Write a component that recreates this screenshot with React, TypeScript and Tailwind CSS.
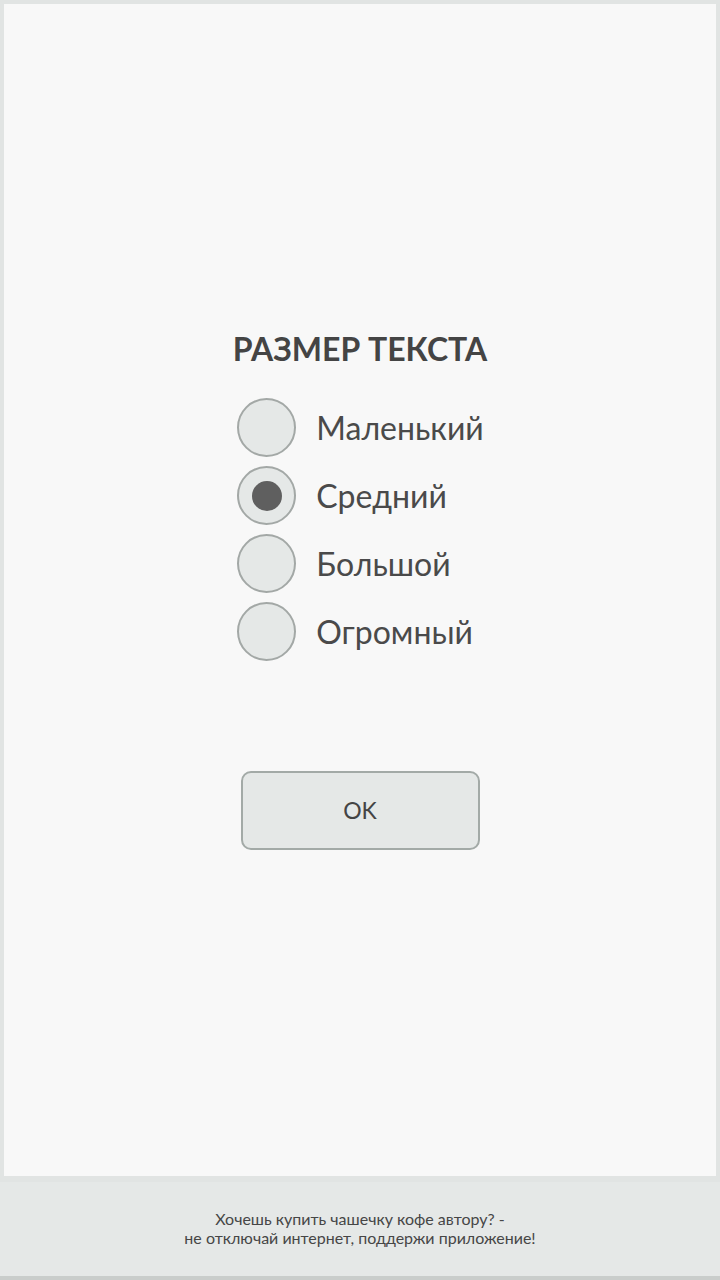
import { useState } from 'react';

const SIZES = ['Маленький', 'Средний', 'Большой', 'Огромный'];

function Radio({ checked }: { checked: boolean }) {
    return (
        <span className="flex h-[59px] w-[59px] shrink-0 items-center justify-center rounded-full border-2 border-[#a3a8a6] bg-[#e5e8e7]">
            {checked && <span className="h-[30px] w-[30px] rounded-full bg-[#5f5f5f]" />}
        </span>
    );
}

export default function App() {
    const [size, setSize] = useState(1);

    return (
        <div className="flex h-[1280px] w-[720px] flex-col bg-[#e1e4e3] font-['Lato',sans-serif]">
            <div className="mx-1 mt-1 flex h-[1172px] flex-col items-center bg-[#f8f8f8] pt-[326px]">
                <h1 className="text-[32px] leading-[38px] font-bold text-[#444444]">РАЗМЕР ТЕКСТА</h1>

                <div className="mt-[30px] flex flex-col gap-[9px] pl-[1px]">
                    {SIZES.map((label, i) => (
                        <button
                            key={label}
                            onClick={() => setSize(i)}
                            className="flex items-center gap-[20px] text-left"
                        >
                            <Radio checked={size === i} />
                            <span className="text-[32px] leading-[40px] text-[#4a4a4a]">{label}</span>
                        </button>
                    ))}
                </div>

                <button className="mt-[110px] flex h-[79px] w-[239px] items-center justify-center rounded-[10px] border-2 border-[#a3aaa7] bg-[#e5e8e7] text-[23px] text-[#444444]">
                    OK
                </button>
            </div>

            <div className="mt-[6px] flex flex-1 flex-col items-center justify-center border-b-4 border-[#c9cdcb] bg-[#e5e8e7] pb-[3px] text-center text-[16px] leading-[19px] text-[#464646]">
                <p>Хочешь купить чашечку кофе автору? -</p>
                <p>не отключай интернет, поддержи приложение!</p>
            </div>
        </div>
    );
}
